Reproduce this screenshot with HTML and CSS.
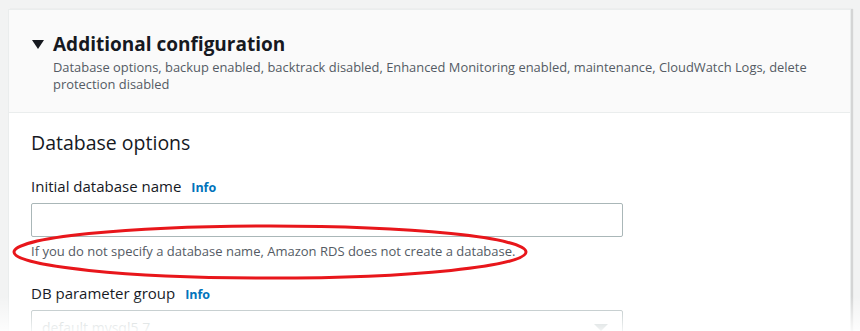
FILE: index.html
```html
<!DOCTYPE html>
<html lang="en">
<head>
    <meta charset="UTF-8">
    <meta name="viewport" content="width=device-width, initial-scale=1.0">
    <title>Additional configuration</title>
    <link rel="stylesheet" href="styles.css">
</head>
<body>
    <div class="container">
        <!-- Expandable section header -->
        <div class="section-header">
            <h2><span class="caret"></span>Additional configuration</h2>
            <p class="summary">Database options, backup enabled, backtrack disabled, Enhanced Monitoring enabled, maintenance, CloudWatch Logs, delete protection disabled</p>
        </div>

        <div class="section-body">
            <h3>Database options</h3>

            <!-- Initial database name -->
            <div class="form-group">
                <label for="db-name">Initial database name <a href="#" class="info">Info</a></label>
                <input type="text" id="db-name" name="db-name">
                <p class="hint">If you do not specify a database name, Amazon RDS does not create a database.</p>
                <svg class="callout" width="520" height="58" viewBox="0 0 520 58">
                    <ellipse cx="259" cy="28" rx="256" ry="26" fill="none" stroke="#e8161b" stroke-width="3"/>
                </svg>
            </div>

            <!-- DB parameter group -->
            <div class="form-group">
                <label for="param-group">DB parameter group <a href="#" class="info">Info</a></label>
                <div class="select">
                    <span>default.mysql5.7</span>
                    <span class="arrow"></span>
                </div>
            </div>
        </div>
    </div>
    <div class="fade"></div>
</body>
</html>
```

FILE: styles.css
```css
html {
    overflow: hidden;
}
body {
    font-family: "Open Sans", Arial, sans-serif;
    margin: 0;
    padding: 9px 9px 0 8px;
    background-color: #f2f3f3;
    color: #16191f;
    overflow: hidden;
    height: 331px;
    box-sizing: border-box;
}
.container {
    background-color: #fff;
    border: 1px solid #eaeded;
    border-bottom: none;
    box-shadow: 2px 0 1px rgba(0, 0, 0, 0.12);
    height: 322px;
    overflow: hidden;
}
.section-header {
    background-color: #fafafa;
    border-bottom: 1px solid #eaeded;
    padding: 21px 20px 19px 23px;
}
.section-header h2 {
    margin: 0;
    font-size: 19px;
    font-weight: 700;
    line-height: 26px;
    display: flex;
    align-items: center;
}
.caret {
    width: 0;
    height: 0;
    border-left: 6px solid transparent;
    border-right: 6px solid transparent;
    border-top: 9px solid #16191f;
    margin-right: 9px;
}
.summary {
    margin: 2px 0 0 21px;
    font-size: 12.9px;
    line-height: 17px;
    color: #545b64;
}
.section-body {
    padding: 17px 22px 0 22px;
}
.section-body h3 {
    margin: 0 0 20px;
    font-size: 19.5px;
    font-weight: 400;
    line-height: 26px;
}
.form-group {
    position: relative;
    margin-bottom: 22px;
}
label {
    display: block;
    font-size: 15px;
    line-height: 20px;
    margin-bottom: 5px;
}
.info {
    color: #0073bb;
    font-size: 12.5px;
    font-weight: 700;
    text-decoration: none;
    margin-left: 6px;
}
input, .select {
    width: 592px;
    height: 34px;
    box-sizing: border-box;
    border: 1px solid #aab7b8;
    border-radius: 2px;
    padding: 4px 10px;
    font-size: 14px;
    display: block;
}
.hint {
    margin: 4px 0 0;
    font-size: 13px;
    line-height: 20px;
    color: #545b64;
}
.callout {
    position: absolute;
    left: -20px;
    top: 48px;
}
.select {
    display: flex;
    align-items: center;
    justify-content: space-between;
    color: #aab7b8;
    padding: 4px 14px 4px 10px;
}
.arrow {
    border-left: 7px solid transparent;
    border-right: 7px solid transparent;
    border-top: 7px solid #aab7b8;
}
.fade {
    position: absolute;
    left: 0;
    right: 0;
    top: 296px;
    height: 35px;
    background: linear-gradient(rgba(255, 255, 255, 0), rgba(255, 255, 255, 0.85));
}
```
